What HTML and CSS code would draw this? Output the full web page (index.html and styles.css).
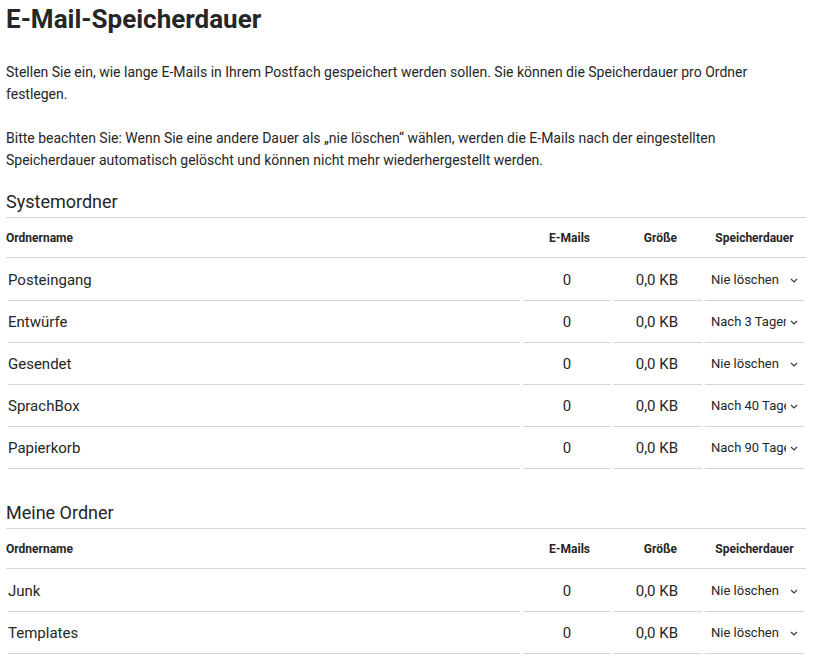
FILE: index.html
```html
<!DOCTYPE html>
<html lang="de">
<head>
  <meta charset="utf-8">
  <title>E-Mail-Speicherdauer</title>
  <link rel="stylesheet" href="styles.css">
</head>
<body>
  <main class="page">
    <h1 class="title">E-Mail-Speicherdauer</h1>
    <p class="intro">Stellen Sie ein, wie lange E-Mails in Ihrem Postfach gespeichert werden sollen. Sie können die Speicherdauer pro Ordner festlegen.</p>
    <p class="intro">Bitte beachten Sie: Wenn Sie eine andere Dauer als „nie löschen“ wählen, werden die E-Mails nach der eingestellten Speicherdauer automatisch gelöscht und können nicht mehr wiederhergestellt werden.</p>

    <section class="folders">
      <h2 class="folders-title">Systemordner</h2>
      <div class="folder-head">
        <span>Ordnername</span>
        <span class="head-count">E-Mails</span>
        <span class="head-size">Größe</span>
        <span class="head-duration">Speicherdauer</span>
      </div>
      <div class="folder-body">
        <div class="folder-row">
          <span class="cell name">Posteingang</span>
          <span class="cell count">0</span>
          <span class="cell size">0,0 KB</span>
          <span class="cell duration">
            <select>
              <option selected>Nie löschen</option>
              <option>Nach 3 Tagen</option>
              <option>Nach 40 Tagen</option>
              <option>Nach 90 Tagen</option>
            </select>
            <svg class="chevron" viewBox="0 0 8 5" width="8" height="5"><path d="M1 1l3 3 3-3"/></svg>
          </span>
        </div>
        <div class="folder-row">
          <span class="cell name">Entwürfe</span>
          <span class="cell count">0</span>
          <span class="cell size">0,0 KB</span>
          <span class="cell duration">
            <select>
              <option>Nie löschen</option>
              <option selected>Nach 3 Tagen</option>
              <option>Nach 40 Tagen</option>
              <option>Nach 90 Tagen</option>
            </select>
            <svg class="chevron" viewBox="0 0 8 5" width="8" height="5"><path d="M1 1l3 3 3-3"/></svg>
          </span>
        </div>
        <div class="folder-row">
          <span class="cell name">Gesendet</span>
          <span class="cell count">0</span>
          <span class="cell size">0,0 KB</span>
          <span class="cell duration">
            <select>
              <option selected>Nie löschen</option>
              <option>Nach 3 Tagen</option>
              <option>Nach 40 Tagen</option>
              <option>Nach 90 Tagen</option>
            </select>
            <svg class="chevron" viewBox="0 0 8 5" width="8" height="5"><path d="M1 1l3 3 3-3"/></svg>
          </span>
        </div>
        <div class="folder-row">
          <span class="cell name">SprachBox</span>
          <span class="cell count">0</span>
          <span class="cell size">0,0 KB</span>
          <span class="cell duration">
            <select>
              <option>Nie löschen</option>
              <option>Nach 3 Tagen</option>
              <option selected>Nach 40 Tagen</option>
              <option>Nach 90 Tagen</option>
            </select>
            <svg class="chevron" viewBox="0 0 8 5" width="8" height="5"><path d="M1 1l3 3 3-3"/></svg>
          </span>
        </div>
        <div class="folder-row">
          <span class="cell name">Papierkorb</span>
          <span class="cell count">0</span>
          <span class="cell size">0,0 KB</span>
          <span class="cell duration">
            <select>
              <option>Nie löschen</option>
              <option>Nach 3 Tagen</option>
              <option>Nach 40 Tagen</option>
              <option selected>Nach 90 Tagen</option>
            </select>
            <svg class="chevron" viewBox="0 0 8 5" width="8" height="5"><path d="M1 1l3 3 3-3"/></svg>
          </span>
        </div>
      </div>
    </section>

    <section class="folders">
      <h2 class="folders-title">Meine Ordner</h2>
      <div class="folder-head">
        <span>Ordnername</span>
        <span class="head-count">E-Mails</span>
        <span class="head-size">Größe</span>
        <span class="head-duration">Speicherdauer</span>
      </div>
      <div class="folder-body">
        <div class="folder-row">
          <span class="cell name">Junk</span>
          <span class="cell count">0</span>
          <span class="cell size">0,0 KB</span>
          <span class="cell duration">
            <select>
              <option selected>Nie löschen</option>
              <option>Nach 3 Tagen</option>
              <option>Nach 40 Tagen</option>
              <option>Nach 90 Tagen</option>
            </select>
            <svg class="chevron" viewBox="0 0 8 5" width="8" height="5"><path d="M1 1l3 3 3-3"/></svg>
          </span>
        </div>
        <div class="folder-row">
          <span class="cell name">Templates</span>
          <span class="cell count">0</span>
          <span class="cell size">0,0 KB</span>
          <span class="cell duration">
            <select>
              <option selected>Nie löschen</option>
              <option>Nach 3 Tagen</option>
              <option>Nach 40 Tagen</option>
              <option>Nach 90 Tagen</option>
            </select>
            <svg class="chevron" viewBox="0 0 8 5" width="8" height="5"><path d="M1 1l3 3 3-3"/></svg>
          </span>
        </div>
      </div>
    </section>
  </main>
</body>
</html>
```

FILE: styles.css
```css
body { margin: 0; background: #fff; color: #262626; font-family: Roboto, "Liberation Sans", sans-serif; }
.page { padding: 3px 7px 0 6px; }

.title { margin: 0 0 26px; font-size: 26px; line-height: 32px; font-weight: 700; }
.intro { margin: 0 0 22px; max-width: 790px; font-size: 14px; line-height: 22px; }
.intro:last-of-type { margin-bottom: 0; }

.folders { margin-top: 19px; }
.folders + .folders { margin-top: 32px; }
.folders-title { margin: 0; padding-bottom: 3px; border-bottom: 1px solid #d4d4d4; font-size: 18px; line-height: 24px; font-weight: 400; }

.folder-head { display: grid; grid-template-columns: 1fr 88px 88px 99px; column-gap: 3px; align-items: center; height: 39px; padding-right: 2px; border-bottom: 1px solid #d4d4d4; font-size: 12px; font-weight: 700; }
.head-count { text-align: right; padding-right: 21px; }
.head-size { text-align: right; padding-right: 25px; }
.head-duration { text-align: center; }

.folder-body { padding-top: 1px; }
.folder-row { display: grid; grid-template-columns: 1fr 88px 88px 99px; column-gap: 3px; height: 42px; margin: 0 2px; }
.cell { display: flex; align-items: center; border-bottom: 1px solid #d4d4d4; font-size: 15px; }
.count { justify-content: center; }
.size { justify-content: flex-end; padding-right: 24px; }

.duration { position: relative; }
.duration select { -webkit-appearance: none; appearance: none; width: 100%; height: 100%; padding: 0 18px 0 6px; border: 0; background: transparent; color: #262626; font-family: inherit; font-size: 13px; outline: none; cursor: pointer; }
.chevron { position: absolute; right: 6px; top: 50%; margin-top: -2px; pointer-events: none; fill: none; stroke: #3a3a3a; stroke-width: 1.2; }
```
